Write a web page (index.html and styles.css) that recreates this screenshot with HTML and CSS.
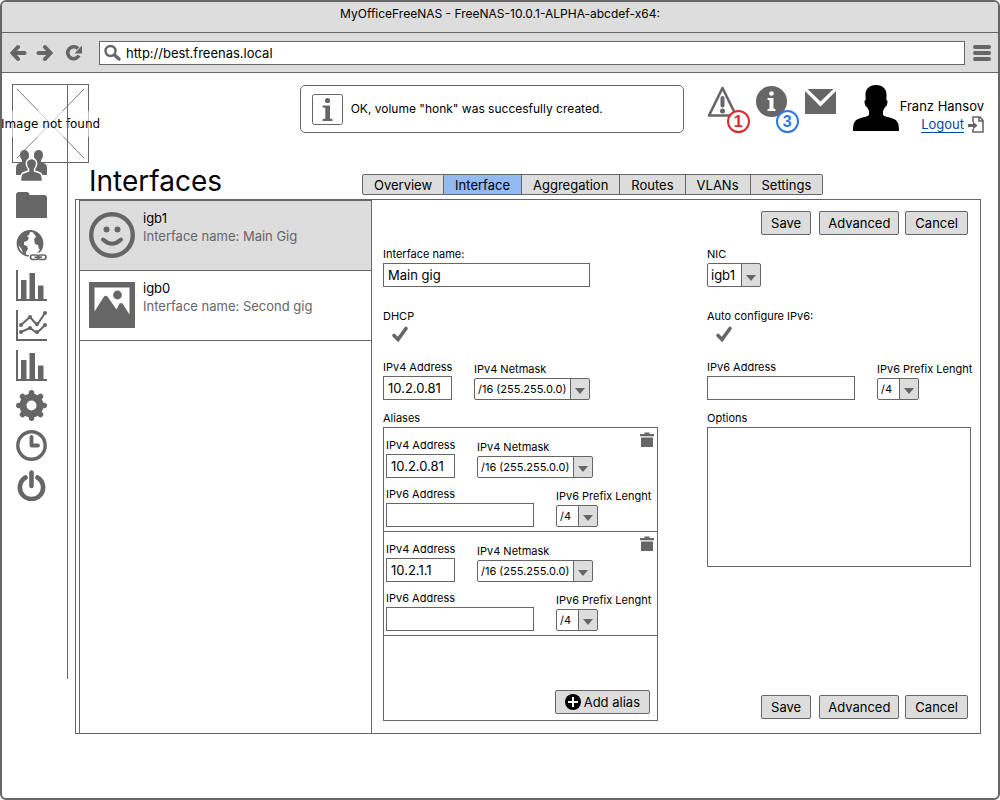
FILE: index.html
```html
<!DOCTYPE html>
<html lang="en">
<head>
<meta charset="utf-8">
<title>MyOfficeFreeNAS</title>
<link rel="stylesheet" href="styles.css">
</head>
<body>
<div class="window">
  <div class="titlebar">MyOfficeFreeNAS - FreeNAS-10.0.1-ALPHA-abcdef-x64:</div>
  <div class="toolbar">
    <div class="nav-buttons">
      <button type="button" aria-label="Back"><svg width="18" height="18" viewBox="0 0 18 18"><path d="M8 3 2.500 9 8 15M3 9h11.500" fill="none" stroke="#666" stroke-width="4" stroke-linecap="round" stroke-linejoin="miter"/></svg></button>
      <button type="button" aria-label="Forward"><svg width="18" height="18" viewBox="0 0 18 18"><path d="m10 3 5.500 6L10 15M15 9H3.500" fill="none" stroke="#666" stroke-width="4" stroke-linecap="round" stroke-linejoin="miter"/></svg></button>
      <button type="button" aria-label="Reload" class="reload"><svg width="18" height="18" viewBox="0 0 18 18"><path d="M13 4.500A6 6 0 1 0 14 11.500" fill="none" stroke="#666" stroke-width="3.600"/><path d="M17 1.500v8h-7.500z" fill="#666"/></svg></button>
    </div>
    <div class="address">
      <svg width="18" height="18" viewBox="0 0 18 18" aria-hidden="true"><circle cx="6.500" cy="7" r="5" fill="none" stroke="#666" stroke-width="2.400"/><path d="m10.500 11 4.500 4" stroke="#666" stroke-width="3.400" stroke-linecap="round"/></svg>
      <input type="text" aria-label="Address" value="http://best.freenas.local">
    </div>
    <button type="button" class="menu" aria-label="Menu"><svg width="18" height="16" viewBox="0 0 18 16"><path d="M2 2h14M2 8h14M2 14h14" stroke="#666" stroke-width="4" stroke-linecap="round"/></svg></button>
  </div>

  <div class="page">
    <div class="logo" role="img" aria-label="Missing logo">
      <svg class="cross" viewBox="0 0 67 69" preserveAspectRatio="none" aria-hidden="true"><path d="M0 0 67 69M67 0 0 69" stroke="#777" stroke-width="1"/></svg>
      <span>Image not found</span>
    </div>
    <nav class="sidebar" aria-label="Sections">
      <a href="#users" aria-label="Users"><svg viewBox="0 0 31 31"><g fill="#666"><path d="M8.500 0C5.500 0 4 2 4 5c0 2 1 4 2 5v2L1.500 14Q0 15 0 18v7h12V12l-1-2c2-1 2-3 2-5 0-3-2-5-4.500-5zM22.500 0c3 0 4.500 2 4.500 5 0 2-1 4-2 5v2l4.500 2q1.500 1 1.500 4v7H19V12l1-2c-2-1-2-3-2-5 0-3 2-5 4.500-5z"/><path d="M15.500 8.500c-4 0-5.500 3-5 6 .2 2 1 3.500 2 4.500v2L7 23c-2 1-2.500 3-2.500 8.500h22c0-5.500-.5-7.500-2.500-8.500l-5.500-2v-2c1-1 1.800-2.500 2-4.500.5-3-1-6-5-6z" stroke="#fff" stroke-width="1.500"/></g></svg></a>
      <a href="#storage" aria-label="Storage"><svg viewBox="0 0 31 31"><path d="M0 5q0-3 3-3h8q2 0 2.500 3H28q3 0 3 3v20H0z" fill="#666"/></svg></a>
      <a href="#network" aria-label="Network"><svg viewBox="0 0 31 31"><circle cx="14" cy="13.500" r="12.500" fill="none" stroke="#666" stroke-width="1.800"/><path d="M1.500 10 6 3.500 11 1l3 1-1 3-2 1 2 2-2 3-3 1 0 3 3 1 1 3-2 3v3l-3-2-2-5-3-3zM18 2l4 2 4 5 1 5-2 6-2-1-1-4-3-1-1-5 2-2-1-2-2-2z" fill="#666"/><g fill="none" stroke="#fff" stroke-width="5"><rect x="15" y="25" width="8" height="4" rx="2"/><rect x="22" y="25" width="8" height="4" rx="2"/></g><g fill="none" stroke="#666" stroke-width="1.700"><rect x="14.500" y="25" width="8" height="4.500" rx="2.200"/><rect x="22" y="25" width="8" height="4.500" rx="2.200"/><path d="M18.500 27.200h7.500"/></g></svg></a>
      <a href="#reports" aria-label="Reports"><svg viewBox="0 0 31 31"><path d="M1 0v30h30" fill="none" stroke="#666" stroke-width="2"/><path d="M5 10h5.500v20H5zM13.500 3H19v27h-5.500zM22 15.500h5.500V30H22z" fill="#666"/></svg></a>
      <a href="#trends" aria-label="Trends"><svg viewBox="0 0 31 31"><path d="M1 0v30h30" fill="none" stroke="#666" stroke-width="2"/><g fill="none" stroke="#666" stroke-width="2"><path d="m5 15 9-8 7 8 8-12M5 22l9-4 7 5 8-8"/></g><g fill="#666"><circle cx="5" cy="15" r="2"/><circle cx="14" cy="7" r="2"/><circle cx="21" cy="14" r="2"/><circle cx="29" cy="3" r="2"/><circle cx="5" cy="22" r="2"/><circle cx="14" cy="18" r="2"/><circle cx="21" cy="22" r="2"/><circle cx="29" cy="15" r="2"/></g></svg></a>
      <a href="#statistics" aria-label="Statistics"><svg viewBox="0 0 31 31"><path d="M1 0v30h30" fill="none" stroke="#666" stroke-width="2"/><path d="M5 10h5.500v20H5zM13.500 3H19v27h-5.500zM22 15.500h5.500V30H22z" fill="#666"/></svg></a>
      <a href="#settings" aria-label="Settings"><svg viewBox="0 0 31 31"><circle cx="15.500" cy="15.500" r="8.500" fill="none" stroke="#666" stroke-width="7"/><path d="M15.500 2.800V6M15.500 25v3.200M2.800 15.500H6M25 15.500h3.200M6.500 6.500 9 9M22 22l2.500 2.500M6.500 24.500 9 22M22 9l2.500-2.500" stroke="#666" stroke-width="5.500" stroke-linecap="round"/></svg></a>
      <a href="#schedule" aria-label="Schedule"><svg viewBox="0 0 31 31"><circle cx="15.500" cy="15.500" r="13.700" fill="none" stroke="#666" stroke-width="3.400"/><path d="M15.500 7v8.500H22" fill="none" stroke="#666" stroke-width="3.800" stroke-linecap="round" stroke-linejoin="round"/></svg></a>
      <a href="#power" aria-label="Power"><svg viewBox="0 0 31 31"><path d="M9.500 7.500a11.600 11.600 0 1 0 12 0" fill="none" stroke="#666" stroke-width="4.600" stroke-linecap="round"/><path d="M15.500 2.500V16" stroke="#666" stroke-width="4.600" stroke-linecap="round"/></svg></a>
    </nav>

    <main class="content">
      <header class="header">
        <div class="notice" role="status">
          <svg width="31" height="31" viewBox="0 0 31 31" aria-hidden="true"><rect x=".5" y=".5" width="30" height="30" rx="2" fill="#fff" stroke="#666"/><circle cx="15.500" cy="6.500" r="2.600" fill="#666"/><path d="M10.500 11.500h7.500v13l2.500.8V27h-10v-1.700l2.800-.8V14l-2.800-.8z" fill="#666"/></svg>
          <span>OK, volume "honk" was succesfully created.</span>
        </div>
        <div class="alerts">
          <button type="button" class="alert" aria-label="Warnings: 1"><svg width="31" height="31" viewBox="0 0 31 31"><path d="M15.500 2 29 29.500H2z" fill="none" stroke="#666" stroke-width="2.600" stroke-linejoin="round"/><path d="M15.500 12v7.500" stroke="#666" stroke-width="4" stroke-linecap="round"/><circle cx="15.500" cy="25" r="2.500" fill="#666"/></svg><span class="badge badge-red">1</span></button>
          <button type="button" class="alert" aria-label="Messages: 3"><svg width="31" height="31" viewBox="0 0 31 31"><circle cx="15.500" cy="15.500" r="15.500" fill="#666"/><circle cx="15.500" cy="7.500" r="2.300" fill="#fff"/><path d="M11.500 12h6v10.500l2 .7V25h-8v-1.800l2-.7v-8l-2-.7z" fill="#fff"/></svg><span class="badge badge-blue">3</span></button>
          <button type="button" class="alert" aria-label="Mail"><svg width="31" height="31" viewBox="0 0 31 31"><path d="M0 5 15.500 20.500 31 5v23H0zM2.500 3h26L15.500 15.500z" fill="#666"/></svg></button>
        </div>
        <div class="user">
          <svg width="46" height="46" viewBox="0 0 46 46" aria-hidden="true"><path d="M23 0c-7 0-11 4-10.500 11l.2 4c-1.500 0-1.500 2-.7 4.500.6 1.800 1.200 2.500 2 2.500l2 4v4c-2 2-6 2-9.500 3.500C1 35 0 39 0 46h46c0-7-1-11-6.500-12.500C36 32 32 32 30 30v-4l2-4c.8 0 1.400-.7 2-2.500.8-2.500.8-4.500-.7-4.500l.2-4C34 4 30 0 23 0z"/></svg>
          <div class="user-info">
            <span>Franz Hansov</span>
            <span class="logout"><a href="#logout">Logout</a><svg width="16" height="17" viewBox="0 0 16 17" aria-hidden="true"><path d="M5 6V1h7l3 3.500V16H5v-3M11 1v4h4" fill="none" stroke="#666" stroke-width="1.600"/><path d="M0 8h5V5.500L9.500 9.500 5 13.500V11H0z" fill="#666"/></svg></span>
          </div>
        </div>
      </header>

      <div class="title-row">
        <h1>Interfaces</h1>
        <nav class="tabs" aria-label="Network pages">
          <button type="button">Overview</button>
          <button type="button" class="current" aria-current="page">Interface</button>
          <button type="button">Aggregation</button>
          <button type="button">Routes</button>
          <button type="button">VLANs</button>
          <button type="button">Settings</button>
        </nav>
      </div>

      <section class="panel">
        <ul class="list">
          <li class="item selected">
            <svg width="46" height="46" viewBox="0 0 46 46" aria-hidden="true"><circle cx="23" cy="23" r="20.800" fill="none" stroke="#666" stroke-width="4.400"/><circle cx="17.500" cy="17.500" r="3" fill="#666"/><circle cx="28.500" cy="17.500" r="3" fill="#666"/><path d="M14 27.500q9 8.500 18 0" fill="none" stroke="#666" stroke-width="4" stroke-linecap="round"/></svg>
            <div><p>igb1</p><p class="detail">Interface name: Main Gig</p></div>
          </li>
          <li class="item">
            <svg width="46" height="46" viewBox="0 0 46 46" aria-hidden="true"><path d="M0 0h46v46H0z" fill="#666"/><path d="M5.500 5.500h35v27l-7-11q-1.500-1-3 0l-3 6-9-13q-2-1.500-3.500 0l-9.500 15z" fill="#fff"/><circle cx="28.500" cy="13" r="4.400" fill="#666"/></svg>
            <div><p>igb0</p><p class="detail">Interface name: Second gig</p></div>
          </li>
        </ul>

        <form class="form">
          <div class="actions">
            <button type="button" class="btn">Save</button>
            <button type="button" class="btn wide">Advanced</button>
            <button type="button" class="btn">Cancel</button>
          </div>
          <div class="columns">
            <div class="column">
              <div class="field name-field"><label for="name">Interface name:</label><input id="name" type="text" value="Main gig"></div>
              <div class="field check-field"><label for="dhcp">DHCP</label><span class="check"><input id="dhcp" type="checkbox" checked><svg viewBox="0 0 18 18" aria-hidden="true"><path d="m3 10.500 4 4 8-11" fill="none" stroke="#666" stroke-width="3.600" stroke-linecap="round"/></svg></span></div>
              <div class="row">
                <div class="field ip4"><label for="ip4">IPv4 Address</label><input id="ip4" type="text" value="10.2.0.81"></div>
                <div class="field"><label for="mask">IPv4 Netmask</label><span class="select mask"><select id="mask"><option>/16 (255.255.0.0)</option></select></span></div>
              </div>
              <h2>Aliases</h2>
              <div class="aliases">
                <div class="alias">
                  <button type="button" class="trash" aria-label="Delete alias"><svg width="14" height="15" viewBox="0 0 14 15"><path d="M0 2h4.500V.5h5V2H14v2.200H0zM1 5.500h12V15H1z" fill="#666"/></svg></button>
                  <div class="row">
                    <div class="field ip4"><label for="a1-ip4">IPv4 Address</label><input id="a1-ip4" type="text" value="10.2.0.81"></div>
                    <div class="field"><label for="a1-mask">IPv4 Netmask</label><span class="select mask"><select id="a1-mask"><option>/16 (255.255.0.0)</option></select></span></div>
                  </div>
                  <div class="row">
                    <div class="field ip6"><label for="a1-ip6">IPv6 Address</label><input id="a1-ip6" type="text"></div>
                    <div class="field"><label for="a1-prefix">IPv6 Prefix Lenght</label><span class="select prefix"><select id="a1-prefix"><option>/4</option></select></span></div>
                  </div>
                </div>
                <div class="alias">
                  <button type="button" class="trash" aria-label="Delete alias"><svg width="14" height="15" viewBox="0 0 14 15"><path d="M0 2h4.500V.5h5V2H14v2.200H0zM1 5.500h12V15H1z" fill="#666"/></svg></button>
                  <div class="row">
                    <div class="field ip4"><label for="a2-ip4">IPv4 Address</label><input id="a2-ip4" type="text" value="10.2.1.1"></div>
                    <div class="field"><label for="a2-mask">IPv4 Netmask</label><span class="select mask"><select id="a2-mask"><option>/16 (255.255.0.0)</option></select></span></div>
                  </div>
                  <div class="row">
                    <div class="field ip6"><label for="a2-ip6">IPv6 Address</label><input id="a2-ip6" type="text"></div>
                    <div class="field"><label for="a2-prefix">IPv6 Prefix Lenght</label><span class="select prefix"><select id="a2-prefix"><option>/4</option></select></span></div>
                  </div>
                </div>
                <button type="button" class="btn add"><svg width="16" height="16" viewBox="0 0 16 16" aria-hidden="true"><circle cx="8" cy="8" r="8"/><path d="M8 3v10M3 8h10" stroke="#fff" stroke-width="2"/></svg>Add alias</button>
              </div>
            </div>

            <div class="column">
              <div class="field name-field"><label for="nic">NIC</label><span class="select nic"><select id="nic"><option>igb1</option></select></span></div>
              <div class="field check-field"><label for="auto6">Auto configure IPv6:</label><span class="check"><input id="auto6" type="checkbox" checked><svg viewBox="0 0 18 18" aria-hidden="true"><path d="m3 10.500 4 4 8-11" fill="none" stroke="#666" stroke-width="3.600" stroke-linecap="round"/></svg></span></div>
              <div class="row">
                <div class="field ip6"><label for="ip6">IPv6 Address</label><input id="ip6" type="text"></div>
                <div class="field"><label for="prefix">IPv6 Prefix Lenght</label><span class="select prefix"><select id="prefix"><option>/4</option></select></span></div>
              </div>
              <div class="field options"><label for="options">Options</label><textarea id="options"></textarea></div>
              <div class="actions actions-bottom">
                <button type="button" class="btn">Save</button>
                <button type="button" class="btn wide">Advanced</button>
                <button type="button" class="btn">Cancel</button>
              </div>
            </div>
          </div>
        </form>
      </section>
    </main>
  </div>
</div>
</body>
</html>
```
FILE: styles.css
```css
* { box-sizing: border-box; }

body {
  margin: 0;
  background: #fff;
  color: #000;
  font: 13px/18px Inter, "Liberation Sans", sans-serif;
}

h1, h2, p, ul { margin: 0; padding: 0; font-weight: 400; }
svg { display: block; flex: none; }
button, input, select, textarea { font: inherit; color: inherit; margin: 0; }
button { padding: 0; border: 0; background: none; }

.window {
  display: flex;
  flex-direction: column;
  min-height: 100vh;
  border: 2px solid #666;
  border-radius: 6px;
  overflow: hidden;
}

.titlebar {
  padding: 3px 0 9px;
  background: #ddd;
  border-bottom: 1px solid #666;
  font-size: 12px;
  text-align: center;
}

.toolbar {
  display: flex;
  align-items: center;
  gap: 8px;
  padding: 8px 7px;
  height: 40px;
  background: #ddd;
  border-bottom: 1px solid #666;
}

.nav-buttons { display: flex; gap: 7px; width: 82px; padding-left: 1px; }
.reload { margin-left: 5px; }

.address {
  display: flex;
  flex: 1;
  align-items: center;
  gap: 4px;
  height: 24px;
  padding-left: 4px;
  background: #fff;
  border: 1px solid #666;
}

.address input { flex: 1; min-width: 0; padding: 0; border: 0; background: none; }

.page {
  position: relative;
  display: flex;
  flex: 1;
  gap: 7px;
  padding: 11px 14px 64px 0;
}

.logo {
  position: absolute;
  top: 11px;
  left: 10px;
  display: grid;
  grid-template-columns: 100%;
  align-items: center;
  justify-items: center;
  width: 77px;
  height: 79px;
  border: 1px solid #666;
}

.cross { grid-area: 1 / 1; width: 67px; height: 69px; }

.logo span {
  display: flex;
  grid-area: 1 / 1;
  justify-self: center;
  padding: 4px;
  background: rgba(255, 255, 255, .6);
  font: 12px/18px "DejaVu Sans", sans-serif;
  white-space: nowrap;
}

.sidebar {
  position: relative;
  display: flex;
  flex: none;
  flex-direction: column;
  align-self: flex-start;
  gap: 9px;
  width: 66px;
  padding: 66px 0 178px 14px;
  border-right: 1px solid #666;
}

.sidebar svg { width: 31px; height: 31px; }

.content {
  display: flex;
  flex: 1;
  flex-direction: column;
  min-width: 0;
  padding-top: 1px;
}

.header { display: flex; justify-content: flex-end; }

.notice {
  display: flex;
  flex: 0 1 384px;
  align-items: center;
  gap: 8px;
  height: 48px;
  padding-left: 11px;
  border: 1px solid #666;
  border-radius: 5px;
  font-size: 12px;
}

.alerts { display: flex; align-items: flex-start; gap: 18px; margin: 1px 17px 0 23px; }
.alert { position: relative; }

.badge {
  position: absolute;
  top: 24px;
  left: 20px;
  width: 23px;
  height: 23px;
  background: #fff;
  border: 2px solid;
  border-radius: 50%;
  font: bold 16px/19px "Liberation Sans", sans-serif;
}

.badge-red { color: #d92b2b; }
.badge-blue { color: #2f78e4; }

.user { display: flex; gap: 1px; }
.user-info { display: flex; flex-direction: column; align-items: flex-end; padding-top: 12px; }
.logout { display: flex; align-items: center; gap: 4px; }
.logout a { color: #004a9c; text-underline-offset: 3px; }

.title-row {
  display: grid;
  grid-template-columns: 273px 1fr;
  align-items: end;
  margin: 34px 0 4px 14px;
}

h1 { font-size: 28px; line-height: 28px; }

.tabs { display: flex; }

.tabs button {
  height: 21px;
  padding: 0 11px;
  background: #ddd;
  border: 1px solid #666;
}

.tabs button + button { border-left: 0; }
.tabs .current { background: #94baf2; }
.tabs button:first-child { border-radius: 2px 0 0 2px; }
.tabs button:last-child { border-radius: 0 2px 2px 0; }

.panel {
  display: flex;
  flex: 1;
  margin-right: 3px;
  padding-left: 3px;
  border: 1px solid #666;
}

.list {
  flex: 0 0 293px;
  border: 1px solid #666;
  border-bottom: 0;
  list-style: none;
}

.item {
  display: flex;
  gap: 8px;
  height: 70px;
  padding: 8px 9px 0;
  border-bottom: 1px solid #666;
}

.item svg { margin-top: 3px; }
.selected { background: #ddd; }
.detail { color: #666; }

.form { display: flex; flex: 1; flex-direction: column; min-width: 0; padding: 11px 9px 12px 11px; }

.actions { display: flex; justify-content: flex-end; padding-right: 3px; }

.btn {
  height: 24px;
  padding: 0 9px;
  background: #ddd;
  border: 1px solid #666;
  border-radius: 2px;
}

.wide { margin: 0 6px 0 8px; padding: 0 8px; }

.columns {
  display: grid;
  flex: 1;
  grid-template-columns: minmax(0, 275fr) minmax(0, 264fr);
  gap: 49px;
  margin-top: 11px;
}

.column { display: flex; flex-direction: column; }

.field { display: flex; flex-direction: column; align-items: flex-start; gap: 1px; }
.field label, h2 { font-size: 11px; line-height: 16px; white-space: nowrap; }

.field input[type="text"] {
  width: 100%;
  height: 24px;
  padding: 0 4px;
  border: 1px solid #666;
  background: #fff;
}

.name-field { margin-bottom: 21px; }
.name-field input[type="text"] { width: 207px; }
.check-field { margin-bottom: 16px; }

.check { display: grid; width: 18px; height: 18px; margin-left: 8px; }
.check input, .check svg { grid-area: 1 / 1; width: 18px; height: 18px; }
.check input { appearance: none; }
.check svg { visibility: hidden; pointer-events: none; }
.check input:checked + svg { visibility: visible; }

.row { display: flex; align-items: flex-end; gap: 22px; margin-bottom: 10px; }
.ip4 { flex: none; width: 69px; }
.ip6 { flex: none; width: 148px; }

.select { position: relative; height: 22px; }

.select::after {
  content: "";
  position: absolute;
  right: 5px;
  bottom: 6px;
  border: 5px solid transparent;
  border-top: 6px solid #666;
  border-bottom: 0;
  pointer-events: none;
}

.select select {
  width: 100%;
  height: 100%;
  padding: 0 20px 0 3px;
  appearance: none;
  background: linear-gradient(to left, #ddd 18px, #666 18px, #666 19px, #fff 19px);
  border: 1px solid #666;
  border-radius: 2px;
  font-size: 11px;
}

.mask { width: 116px; }
.prefix { width: 42px; }
.nic { width: 54px; height: 24px; }
.nic select { font-size: 13px; }

.aliases {
  display: flex;
  flex: 1;
  flex-direction: column;
  margin-top: 1px;
  border: 1px solid #666;
}

.alias { position: relative; height: 104px; padding: 9px 2px 0; border-bottom: 1px solid #666; }
.alias .row { margin-bottom: 8px; }
.trash { position: absolute; top: 4px; right: 3px; }

.add {
  display: flex;
  align-items: center;
  align-self: flex-end;
  gap: 3px;
  margin: auto 7px 6px 0;
}

.options { align-items: stretch; }

textarea {
  height: 140px;
  padding: 4px;
  border: 1px solid #666;
  resize: none;
}

.actions-bottom { margin: auto 0 2px; }
```
